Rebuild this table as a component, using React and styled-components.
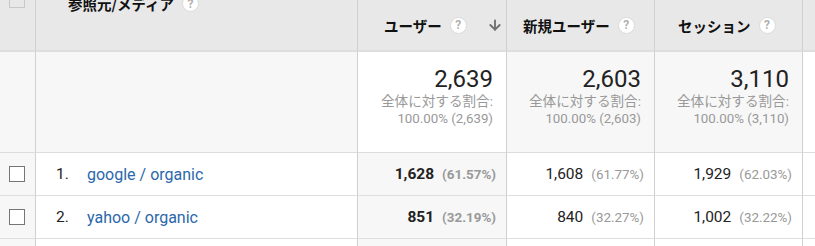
import React from 'react';
import styled, { createGlobalStyle } from 'styled-components';
import { ArrowDown } from 'lucide-react';

const GlobalStyle = createGlobalStyle`
  body {
    margin: 0;
    background: #fff;
    font-family: Roboto, "Noto Sans CJK JP", sans-serif;
    overflow: hidden;
  }
`;

const Table = styled.div`
  display: grid;
  grid-template-columns: 36px 322px 149px 148px 148px 1fr;
  width: 815px;
`;

const HeadCell = styled.div`
  height: 52px;
  box-sizing: border-box;
  background: #e8e8e8;
  border-right: 1px solid #d0d0d0;
  border-bottom: 2px solid #dedede;
  display: flex;
  align-items: ${(p) => (p.$top ? 'flex-start' : 'center')};
  padding-left: ${(p) => p.$pad || 0}px;
  padding-right: ${(p) => (p.$sorted ? 3 : 10)}px;
  font-family: "Noto Sans CJK JP", sans-serif;
  font-size: 14.5px;
  font-weight: 700;
  color: #111;
`;

const HeadLabel = styled.span`
  display: flex;
  align-items: center;
  gap: 8px;
  white-space: nowrap;
  margin-top: ${(p) => p.$lift || 0}px;
`;

const Help = styled.span`
  flex: none;
  width: 17px;
  height: 17px;
  border-radius: 50%;
  background: #fff;
  border: 1px solid #dadada;
  box-sizing: border-box;
  color: #b0b0b0;
  font-family: Roboto, sans-serif;
  font-size: 12px;
  font-weight: 700;
  display: flex;
  align-items: center;
  justify-content: center;
`;

const SortArrow = styled.span`
  margin-left: auto;
  color: #6f6f6f;
  display: flex;
`;

const Box = styled.span`
  width: 16px;
  height: 16px;
  box-sizing: border-box;
  border: 1px solid ${(p) => (p.$head ? '#c8c8c8' : '#767676')};
  background: ${(p) => (p.$head ? '#e8e8e8' : '#fff')};
  margin-left: 9px;
  margin-top: ${(p) => p.$lift || 0}px;
`;

const SumCell = styled.div`
  height: 101px;
  box-sizing: border-box;
  background: ${(p) => (p.$white ? '#fff' : '#f7f7f7')};
  border-right: 1px solid #d0d0d0;
  border-bottom: 1px solid #dcdcdc;
  padding: 13px 13px 0 0;
  text-align: right;
`;

const Total = styled.div`
  font-size: 24px;
  line-height: 28px;
  color: #222;
`;

const Share = styled.div`
  font-family: Roboto, "Noto Sans CJK JP", sans-serif;
  font-size: ${(p) => (p.$jp ? 13.6 : 13.3)}px;
  line-height: 17px;
  color: #999;
`;

const Cell = styled.div`
  height: 43px;
  box-sizing: border-box;
  background: ${(p) => (p.$grey ? '#f7f7f7' : '#fff')};
  border-right: 1px solid #d0d0d0;
  border-bottom: 1px solid #dedede;
  display: flex;
  align-items: center;
  justify-content: ${(p) => (p.$num ? 'flex-end' : 'flex-start')};
  padding-right: ${(p) => (p.$num ? 10 : 0)}px;
  color: #222;
`;

const Rank = styled.span`
  width: 31px;
  margin-left: 20px;
  font-size: 15.5px;
`;

const Link = styled.a`
  color: #2a67ab;
  font-size: 16px;
  text-decoration: none;
`;

const Value = styled.span`
  font-weight: ${(p) => (p.$bold ? 700 : 400)};
  font-size: 15.5px;
`;

const Pct = styled.span`
  margin-left: 8px;
  font-size: 13.4px;
  color: #999;
  font-weight: ${(p) => (p.$bold ? 700 : 400)};
`;

const metrics = [
  { label: 'ユーザー', pad: 26, total: '2,639', sorted: true },
  { label: '新規ユーザー', pad: 16, total: '2,603' },
  { label: 'セッション', pad: 23, total: '3,110' },
];

const rows = [
  { rank: '1.', name: 'google / organic', values: [['1,628', '61.57%'], ['1,608', '61.77%'], ['1,929', '62.03%']] },
  { rank: '2.', name: 'yahoo / organic', values: [['851', '32.19%'], ['840', '32.27%'], ['1,002', '32.22%']] },
];

export default function App() {
  return (
    <>
      <GlobalStyle />
      <Table>
        <HeadCell $top>
          <Box $head $lift={-8} />
        </HeadCell>
        <HeadCell $top $pad={32}>
          <HeadLabel $lift={-7}>
            参照元/メディア <Help>?</Help>
          </HeadLabel>
        </HeadCell>
        {metrics.map((m) => (
          <HeadCell key={m.label} $pad={m.pad} $sorted={m.sorted}>
            <HeadLabel>
              {m.label} <Help>?</Help>
            </HeadLabel>
            {m.sorted && (
              <SortArrow>
                <ArrowDown size={16} strokeWidth={2.8} />
              </SortArrow>
            )}
          </HeadCell>
        ))}
        <HeadCell />

        <SumCell />
        <SumCell />
        {metrics.map((m) => (
          <SumCell key={m.label} $white={m.sorted}>
            <Total>{m.total}</Total>
            <Share $jp>全体に対する割合:</Share>
            <Share>100.00% ({m.total})</Share>
          </SumCell>
        ))}
        <SumCell $white />

        {rows.map((r) => (
          <React.Fragment key={r.rank}>
            <Cell $grey>
              <Box />
            </Cell>
            <Cell>
              <Rank>{r.rank}</Rank>
              <Link href="#">{r.name}</Link>
            </Cell>
            {r.values.map(([v, p], i) => (
              <Cell key={i} $num $grey={i === 0}>
                <Value $bold={i === 0}>{v}</Value>
                <Pct $bold={i === 0}>({p})</Pct>
              </Cell>
            ))}
            <Cell />
          </React.Fragment>
        ))}
        <Cell $grey />
        <Cell />
        <Cell $grey />
        <Cell />
        <Cell />
        <Cell />
      </Table>
    </>
  );
}
